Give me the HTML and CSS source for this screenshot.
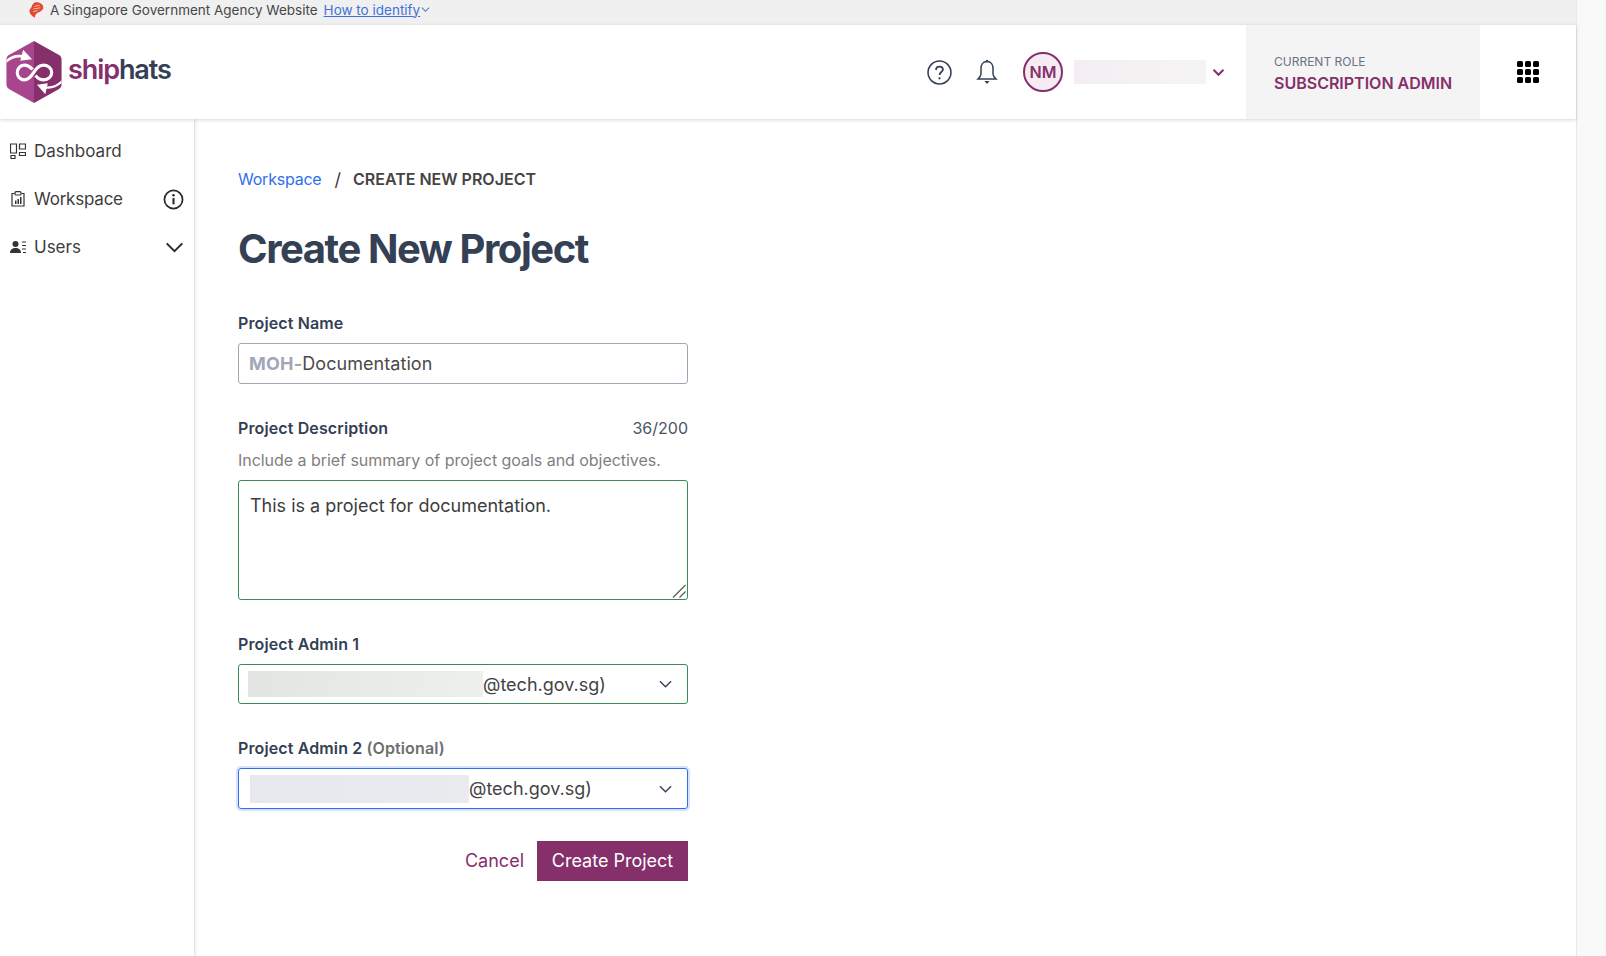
FILE: index.html
```html
<!DOCTYPE html>
<html lang="en">

<head>
    <meta charset="UTF-8">
    <meta name="viewport" content="width=device-width, initial-scale=1.0">
    <title>Create New Project</title>
    <link rel="stylesheet" href="styles.css">
</head>

<body>
    <div class="window">
        <div class="page">
            <div class="gov-bar">
                <svg class="lion" viewBox="1 0 14.500 16" width="15" height="16">
                    <path d="M6 .7C9 -.4 14.500 1 15 5C15.300 8 12 9.500 10 10.500C8 11.500 6.500 13 6.500 15.800C4 14 1.200 12 1.200 9C1.200 7 2.800 6.500 3.300 5C3.600 3.500 4.500 1.700 6 .7Z" fill="#e2492f"/>
                    <path d="M6 4.500L11.500 3.200M5 7L12 5.800M5 9.500L9.500 8.600" stroke="#f6b8a8" stroke-width="1" fill="none"/>
                </svg>
                <span class="gov-text">A Singapore Government Agency Website</span>
                <a class="gov-link" href="#">How to identify</a>
                <svg class="gov-chevron" viewBox="0 0 10 10" width="9" height="9">
                    <path d="M1 3L5 7L9 3" stroke="#4a78d6" stroke-width="1.200" fill="none"/>
                </svg>
            </div>

            <header class="topbar">
                <a class="logo" href="#">
                    <svg viewBox="0 0 56 63" width="56" height="62">
                        <path d="M28 0L28 63L3 49Q0 47.500 0 44L0 19Q0 15.500 3 14Z" fill="#a8468d"/>
                        <path d="M28 0L53 14Q56 15.500 56 19L56 44Q56 47.500 53 49L28 63Z" fill="#852f6b"/>
                        <path d="M26.500 29C24 26 22 24.500 18 24.500C14 24.500 11 28 11 32C11 36 14 39.500 18 39.500C23.500 39.500 26 34.500 29 30C31 27 33.500 24.500 38 24.500C42.500 24.500 46 28 46 32C46 36 42.500 39.500 38 39.500C34.500 39.500 31.500 37.500 29.500 35" fill="none" stroke="#fff" stroke-width="3.200"/>
                        <path d="M0 19C6 14 12 12.500 20 15.500L19.500 17.500C12 15.500 6 17 0 22Z" fill="#fff"/>
                        <path d="M17 9L26 18.500L14 20Z" fill="#fff"/>
                        <path d="M56 43C50 48 44 50 36 47.500L36.500 45.500C44 47 50 46 56 40Z" fill="#fff"/>
                        <path d="M31 44.500L42 43L39.500 54Z" fill="#fff"/>
                    </svg>
                    <span class="logo-text"><span class="logo-ship">ship</span>hats</span>
                </a>

                <div class="topbar-right">
                    <svg class="top-icon help" viewBox="0 0 24 24" width="25" height="25">
                        <circle cx="12" cy="12" r="11" fill="none" stroke="#344054" stroke-width="1.500"/>
                        <path d="M8.700 9.500C8.700 7.500 10.200 6.300 12 6.300C13.900 6.300 15.300 7.500 15.300 9.200C15.300 11.500 12 11.700 12 14.500" fill="none" stroke="#344054" stroke-width="1.700"/>
                        <circle cx="12" cy="17.600" r="1.100" fill="#344054"/>
                    </svg>
                    <svg class="top-icon bell" viewBox="0 0 24 26" width="24" height="26">
                        <path d="M12 2.500C7.800 2.500 6 6 6 9.500V15C6 17 4.500 18.500 3 20H21C19.500 18.500 18 17 18 15V9.500C18 6 16.200 2.500 12 2.500Z" fill="none" stroke="#344054" stroke-width="1.500"/>
                        <circle cx="12" cy="2" r="1.200" fill="#344054"/>
                        <path d="M9.500 22H14.500L12 25Z" fill="#344054"/>
                    </svg>
                    <div class="avatar">NM</div>
                    <div class="blur-name"></div>
                    <svg class="user-chevron" viewBox="0 0 14 10" width="13" height="9">
                        <path d="M1.500 2L7 7.500L12.500 2" fill="none" stroke="#852f6b" stroke-width="2.200"/>
                    </svg>
                    <div class="role">
                        <div class="role-label">CURRENT ROLE</div>
                        <div class="role-name">SUBSCRIPTION ADMIN</div>
                    </div>
                    <div class="apps">
                        <i></i><i></i><i></i><i></i><i></i><i></i><i></i><i></i><i></i>
                    </div>
                </div>
            </header>

            <div class="body-row">
                <nav class="sidebar">
                    <a class="nav-item" href="#">
                        <svg viewBox="0 0 16 16" width="16" height="16">
                            <path d="M.5 1H6.500V10H.5ZM9.500 1H15.500V6H9.500ZM9.500 9.500H15.500V12.500H9.500ZM1 12.500H5V15.500H1Z" fill="none" stroke="#333" stroke-width="1.200"/>
                        </svg>
                        <span>Dashboard</span>
                    </a>
                    <a class="nav-item" href="#">
                        <svg viewBox="0 0 16 16" width="16" height="16">
                            <path d="M4.500 2.500H2V15H14V2.500H11.500" fill="none" stroke="#333" stroke-width="1.200"/>
                            <rect x="5" y=".7" width="6" height="3.300" rx="1" fill="none" stroke="#333" stroke-width="1.200"/>
                            <path d="M5 9.500H6.500V13H5ZM7.500 8H9V13H7.500ZM10 6H11.500V13H10Z" fill="#333"/>
                        </svg>
                        <span class="tight">Workspace</span>
                        <svg class="nav-end" viewBox="0 0 22 22" width="21" height="21">
                            <circle cx="11" cy="11" r="9.500" fill="none" stroke="#2b2b2b" stroke-width="1.800"/>
                            <path d="M11 9.500V16" stroke="#2b2b2b" stroke-width="2.200"/>
                            <circle cx="11" cy="6.500" r="1.300" fill="#2b2b2b"/>
                        </svg>
                    </a>
                    <a class="nav-item" href="#">
                        <svg viewBox="0 0 16 16" width="16" height="16">
                            <circle cx="5.500" cy="5" r="3" fill="#333"/>
                            <path d="M0 14C0 10.500 2.500 9 5.500 9C8.500 9 11 10.500 11 14Z" fill="#333"/>
                            <path d="M12 3H16M12 6.500H16M12 10H16M13 13.500H16" stroke="#333" stroke-width="1.100"/>
                        </svg>
                        <span>Users</span>
                        <svg class="nav-end" viewBox="0 0 20 12" width="19" height="11">
                            <path d="M1.500 1.500L10 10L18.500 1.500" fill="none" stroke="#2b2b2b" stroke-width="2.200"/>
                        </svg>
                    </a>
                </nav>

                <main class="content">
                    <div class="breadcrumb">
                        <a class="tight" href="#">Workspace</a>
                        <span class="crumb-sep">/</span>
                        <span class="crumb-current">CREATE NEW PROJECT</span>
                    </div>

                    <h1>Create New Project</h1>

                    <form class="form">
                        <div class="field name-field">
                            <label for="name">Project Name</label>
                            <div class="input-box">
                                <span class="prefix">MOH-</span>
                                <input type="text" id="name" value="Documentation">
                            </div>
                        </div>

                        <div class="field desc-field">
                            <div class="label-row">
                                <label for="desc">Project Description</label>
                                <span class="count">36/200</span>
                            </div>
                            <p class="hint">Include a brief summary of project goals and objectives.</p>
                            <div class="textarea-wrap">
                                <textarea id="desc">This is a project for documentation.</textarea>
                                <svg class="grip" viewBox="0 0 14 14" width="14" height="14">
                                    <path d="M1 13.500L13.500 1M7.500 13.500L13.500 7.500" stroke="#555" stroke-width="1.100"/>
                                </svg>
                            </div>
                        </div>

                        <div class="field admin-one">
                            <label>Project Admin 1</label>
                            <div class="select-box valid">
                                <div class="blur-mail blur-one"></div>
                                <span>@tech.gov.sg)</span>
                                <svg class="select-chevron" viewBox="0 0 14 8" width="13" height="8">
                                    <path d="M1 1L7 7L13 1" fill="none" stroke="#374151" stroke-width="1.500"/>
                                </svg>
                            </div>
                        </div>

                        <div class="field admin-two">
                            <label>Project Admin 2 <span class="optional">(Optional)</span></label>
                            <div class="select-box focused">
                                <div class="blur-mail blur-two"></div>
                                <span>@tech.gov.sg)</span>
                                <svg class="select-chevron" viewBox="0 0 14 8" width="13" height="8">
                                    <path d="M1 1L7 7L13 1" fill="none" stroke="#374151" stroke-width="1.500"/>
                                </svg>
                            </div>
                        </div>

                        <div class="actions">
                            <a class="cancel" href="#">Cancel</a>
                            <button type="button" class="submit">Create Project</button>
                        </div>
                    </form>
                </main>
            </div>
        </div>
        <div class="scrollbar"></div>
    </div>
</body>

</html>
```

FILE: styles.css
```css
* {
    box-sizing: border-box;
}

html,
body {
    height: 100%;
    margin: 0;
    overflow: hidden;
}

body {
    font-family: Inter, "Liberation Sans", sans-serif;
    font-size: 16px;
    color: #3d3d3d;
    background: #fff;
}

a {
    text-decoration: none;
}

.tight {
    letter-spacing: -0.22px;
}

.window {
    display: flex;
    height: 100%;
}

.page {
    flex: 1;
    display: flex;
    flex-direction: column;
    min-width: 0;
}

.scrollbar {
    width: 30px;
    background: #f9f9f9;
    border-left: 1px solid #e8e8e8;
}

/* masthead */
.gov-bar {
    height: 25px;
    display: flex;
    align-items: center;
    padding: 0 0 6px 29px;
    background: #f0f0f0;
    font-size: 13.5px;
    color: #474747;
}

.gov-text {
    margin-left: 6px;
    margin-right: 6px;
}

.gov-link {
    color: #3f72d8;
    text-decoration: underline;
}

.gov-chevron {
    margin-left: 1px;
}

/* top header */
.topbar {
    height: 94px;
    display: flex;
    justify-content: space-between;
    background: #fff;
    box-shadow: 0 1px 4px rgba(0, 0, 0, 0.16);
    position: relative;
    z-index: 2;
}

.logo {
    display: flex;
    align-items: center;
    padding-left: 6px;
}

.logo-text {
    margin-left: 6px;
    margin-bottom: 6px;
    font-size: 27px;
    font-weight: 600;
    letter-spacing: -1.1px;
    color: #344054;
}

.logo-ship {
    color: #852f6b;
}

.topbar-right {
    display: flex;
    align-items: center;
}

.top-icon {
    margin-right: 22px;
}

.help {
    margin-right: 23px;
}

.bell {
    margin-right: 23px;
}

.avatar {
    width: 40px;
    height: 40px;
    margin-left: 1px;
    border: 2px solid #852f6b;
    border-radius: 50%;
    background: #f5ebf2;
    color: #852f6b;
    font-weight: 600;
    display: flex;
    align-items: center;
    justify-content: center;
}

.blur-name {
    width: 132px;
    height: 24px;
    margin-left: 11px;
    background: linear-gradient(90deg, #f4eef2, #f5f4f4);
}

.user-chevron {
    margin-left: 6px;
    margin-right: 21px;
}

.role {
    width: 234px;
    align-self: stretch;
    background: #f4f4f4;
    padding-left: 28px;
    display: flex;
    flex-direction: column;
    justify-content: center;
}

.role-label {
    font-size: 12px;
    color: #6b7280;
    margin-bottom: 4px;
    margin-top: 2px;
}

.role-name {
    font-weight: 600;
    color: #852f6b;
}

.apps {
    width: 96px;
    display: grid;
    grid-template-columns: repeat(3, 6px);
    grid-auto-rows: 6px;
    gap: 2px;
    justify-content: center;
    align-content: center;
}

.apps i {
    background: #000;
    border-radius: 1.500px;
}

/* layout below the header */
.body-row {
    flex: 1;
    display: flex;
    min-height: 0;
}

.sidebar {
    width: 195px;
    padding-top: 8px;
    border-right: 1px solid #e4e4e4;
    box-shadow: 1px 0 3px rgba(0, 0, 0, 0.08);
}

.nav-item {
    height: 48px;
    display: flex;
    align-items: center;
    padding: 0 10px;
    color: #3d3d3d;
    font-size: 17px;
}

.nav-item span {
    margin-left: 8px;
}

.nav-end {
    margin-left: auto;
}

.content {
    flex: 1;
    padding: 48px 0 0 43px;
}

.breadcrumb {
    height: 24px;
    display: flex;
    align-items: center;
}

.breadcrumb a {
    color: #2f6fed;
}

.crumb-sep {
    margin: 0 12px 0 13px;
    font-size: 18px;
}

.crumb-current {
    font-weight: 600;
    color: #444;
}

h1 {
    margin: 34px 0 0;
    font-size: 40px;
    line-height: 48px;
    font-weight: 700;
    letter-spacing: -1.43px;
    color: #344054;
}

.form {
    width: 450px;
    margin-top: 38px;
}

.field label {
    display: block;
    font-weight: 600;
    letter-spacing: 0.12px;
    color: #344054;
    line-height: 24px;
}

.input-box {
    height: 41px;
    margin-top: 8px;
    display: flex;
    align-items: center;
    padding: 0 10px;
    border: 1px solid #a0a6b4;
    border-radius: 3px;
    font-size: 18px;
}

.prefix {
    font-weight: 700;
    letter-spacing: 0.2px;
    color: #a0a8b8;
}

.input-box input {
    flex: 1;
    min-width: 0;
    border: none;
    outline: none;
    padding: 0;
    font: inherit;
    letter-spacing: 0.05px;
    color: #4a4a4a;
}

.desc-field {
    margin-top: 32px;
}

.label-row {
    display: flex;
    justify-content: space-between;
    align-items: center;
}

.count {
    color: #4b5563;
}

.hint {
    margin: 8px 0 0;
    line-height: 24px;
    letter-spacing: -0.04px;
    color: #808080;
}

.textarea-wrap {
    position: relative;
    margin-top: 8px;
}

textarea {
    display: block;
    width: 100%;
    height: 120px;
    padding: 12px 11px;
    border: 1px solid #3a8a57;
    border-radius: 3px;
    outline: none;
    resize: none;
    font-family: inherit;
    font-size: 18px;
    line-height: 26px;
    color: #3d3d3d;
}

.grip {
    position: absolute;
    right: 2px;
    bottom: 2px;
}

.admin-one {
    margin-top: 32px;
}

.admin-two {
    margin-top: 32px;
}

.select-box {
    height: 40px;
    margin-top: 8px;
    display: flex;
    align-items: center;
    padding-right: 15px;
    border-radius: 3px;
    font-size: 18px;
    color: #444;
}

.select-box.valid {
    border: 1px solid #3a8a57;
}

.select-box.focused {
    height: 41px;
    border: 1px solid #2f6fed;
    box-shadow: 0 0 0 2px #d6e3fb;
}

.blur-mail {
    height: 28px;
}

.blur-one {
    width: 235px;
    height: 26px;
    margin-left: 9px;
    background: linear-gradient(100deg, #e3e5e3, #eef0ee);
}

.blur-two {
    width: 219px;
    margin-left: 11px;
    background: linear-gradient(100deg, #e6e8ee, #e9ebef);
}

.select-chevron {
    margin-left: auto;
}

.optional {
    color: #6e6e6e;
}

.actions {
    margin-top: 32px;
    display: flex;
    justify-content: flex-end;
    align-items: center;
}

.cancel {
    margin-right: 13px;
    padding-bottom: 2px;
    font-size: 18px;
    color: #852f6b;
}

.submit {
    width: 151px;
    height: 40px;
    padding: 0 0 2px;
    border: none;
    background: #852f6b;
    color: #fff;
    font-family: inherit;
    font-size: 18px;
    cursor: pointer;
}
```
